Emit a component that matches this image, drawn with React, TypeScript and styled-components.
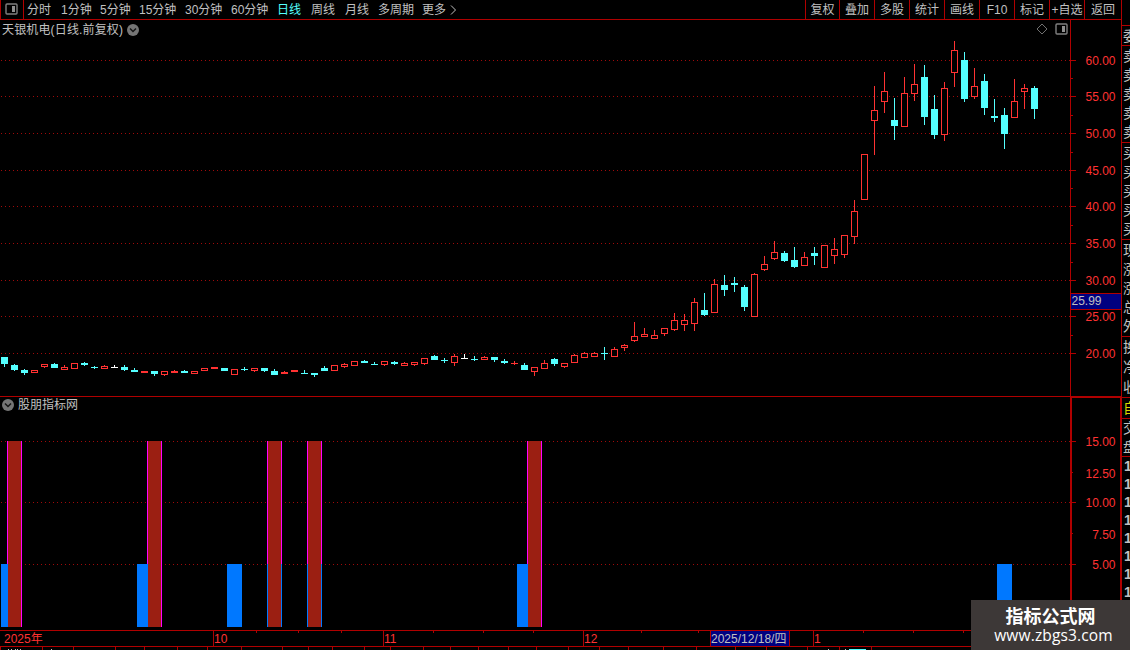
import styled, { createGlobalStyle } from 'styled-components'

const RED = '#b00000'
const UP = '#ff3232'
const DOWN = '#54ffff'
const TEXT = '#c0c0c0'

// [color, high, bodyTop, bodyBottom, low] - r: up, c: down, w: flat
type Candle = [string, number, number, number, number]

const candles: Candle[] = [
    ['c', 357, 357, 364, 367], ['c', 364, 365, 370, 371], ['c', 369, 370, 373, 375], ['r', 370, 370, 373, 373],
    ['r', 364, 364, 367, 368], ['c', 363, 364, 368, 368], ['r', 365, 367, 370, 370], ['r', 363, 363, 369, 369],
    ['c', 362, 363, 365, 366], ['c', 366, 367, 368, 369], ['r', 365, 366, 369, 369], ['w', 365, 367, 368, 368],
    ['c', 365, 367, 370, 371], ['c', 368, 370, 372, 372], ['r', 371, 371, 373, 373], ['c', 371, 371, 374, 376],
    ['r', 371, 371, 375, 376], ['r', 370, 371, 373, 373], ['c', 370, 371, 373, 373], ['r', 371, 371, 374, 374],
    ['r', 368, 368, 371, 371], ['r', 367, 367, 369, 369], ['c', 368, 368, 371, 371], ['r', 369, 369, 375, 375],
    ['c', 367, 369, 370, 371], ['r', 368, 368, 371, 372], ['c', 368, 368, 371, 372], ['c', 369, 371, 375, 375],
    ['r', 371, 372, 374, 374], ['r', 370, 370, 372, 372], ['c', 370, 373, 374, 374], ['c', 373, 373, 375, 377],
    ['c', 366, 368, 371, 371], ['r', 365, 365, 371, 371], ['r', 363, 364, 367, 368], ['r', 361, 361, 366, 366],
    ['c', 360, 361, 363, 363], ['c', 362, 364, 365, 365], ['r', 361, 361, 365, 366], ['c', 361, 362, 364, 365],
    ['r', 362, 363, 366, 366], ['r', 362, 362, 365, 366], ['r', 358, 358, 364, 365], ['c', 355, 356, 360, 360],
    ['c', 358, 360, 361, 363], ['r', 354, 356, 363, 366], ['w', 354, 358, 359, 359], ['c', 356, 359, 360, 361],
    ['r', 356, 357, 360, 360], ['c', 357, 357, 360, 362], ['c', 359, 361, 363, 364], ['r', 361, 363, 364, 365],
    ['c', 363, 365, 370, 370], ['r', 367, 367, 372, 376], ['r', 360, 363, 369, 369], ['c', 358, 359, 364, 366],
    ['r', 363, 363, 367, 368], ['r', 354, 355, 363, 363], ['r', 352, 353, 358, 358], ['r', 352, 353, 357, 357],
    ['c', 347, 353, 354, 360], ['r', 347, 349, 357, 357], ['r', 344, 345, 348, 351], ['r', 322, 336, 341, 342],
    ['r', 328, 334, 337, 337], ['r', 330, 335, 339, 339], ['r', 328, 328, 334, 336], ['r', 313, 320, 330, 331],
    ['r', 314, 320, 325, 331], ['r', 298, 302, 324, 331], ['c', 293, 310, 315, 316], ['r', 279, 284, 313, 313],
    ['c', 275, 285, 290, 296], ['c', 277, 283, 285, 292], ['c', 285, 287, 307, 311], ['r', 273, 274, 317, 317],
    ['r', 256, 264, 270, 271], ['r', 241, 252, 259, 260], ['c', 251, 253, 261, 262], ['c', 247, 260, 267, 268],
    ['r', 252, 257, 266, 266], ['c', 247, 253, 256, 265], ['r', 245, 245, 268, 268], ['r', 238, 249, 256, 264],
    ['r', 235, 235, 255, 258], ['r', 200, 211, 237, 244], ['r', 154, 154, 200, 200], ['r', 86, 110, 121, 155],
    ['r', 72, 91, 102, 113], ['c', 98, 120, 126, 140], ['r', 77, 93, 127, 127], ['r', 64, 84, 94, 101],
    ['c', 65, 77, 117, 125], ['c', 95, 109, 135, 139], ['r', 82, 88, 135, 141], ['r', 41, 50, 73, 87],
    ['c', 52, 60, 99, 102], ['r', 68, 86, 97, 99], ['c', 74, 81, 108, 115], ['c', 99, 116, 118, 122],
    ['c', 108, 115, 134, 149], ['r', 79, 101, 118, 118], ['r', 84, 88, 92, 109], ['c', 86, 88, 109, 119],
]

const priceTicks = [60, 96, 133, 170, 206, 243, 280, 316, 353]
const priceMinor = [78, 115, 152, 188, 225, 262, 335]
const signalGrid = [441, 502, 564]
const signalLabels: [string, number][] = [
    ['15.00', 442], ['12.50', 474], ['10.00', 503], ['7.50', 535], ['5.00', 565],
]

const periods = [
    { text: '分时', width: 34 },
    { text: '1分钟', width: 39 },
    { text: '5分钟', width: 39 },
    { text: '15分钟', width: 46 },
    { text: '30分钟', width: 46 },
    { text: '60分钟', width: 46 },
    { text: '日线', width: 34, active: true },
    { text: '周线', width: 34 },
    { text: '月线', width: 33 },
    { text: '多周期', width: 44 },
    { text: '更多', width: 27 },
]

const tools = [
    { text: '复权', width: 34 },
    { text: '叠加', width: 35 },
    { text: '多股', width: 35 },
    { text: '统计', width: 35 },
    { text: '画线', width: 35 },
    { text: 'F10', width: 35 },
    { text: '标记', width: 35 },
    { text: '+自选', width: 35 },
    { text: '返回', width: 36 },
]

const quoteGroups = [
    { height: 20, rows: ['委'] },
    { height: 97, rows: ['卖', '卖', '卖', '卖', '卖'] },
    { height: 97, rows: ['买', '买', '买', '买', '买'] },
    { height: 97, rows: ['现', '涨', '涨', '总', '外'] },
    { height: 61, rows: ['换', '净', '收'] },
    { height: 21, rows: ['自'], color: '#d8d800' },
    { height: 38, rows: ['交', '盘'] },
]

const months = [
    { text: '2025年', width: 213, pad: 4 },
    { text: '10', width: 170, pad: 0 },
    { text: '11', width: 200, pad: 0 },
    { text: '12', width: 127, pad: 0 },
    { text: '2025/12/18/四', width: 79, pad: 0, current: true },
    { text: '', width: 24, pad: 0 },
    { text: '1', width: 308, pad: 0 },
]

const dayTicks = [256, 298, 341, 433, 483, 533, 641, 698, 863, 913, 963]
const tabTicks = [
    0, 42, 73, 115, 144, 177, 207, 241, 282, 308, 332, 364, 390, 423, 450, 478,
    508, 536, 568, 599, 628, 663, 696, 735, 766, 807, 839, 871,
]

const PanelIcon = () => (
    <svg width="13" height="12" viewBox="0 0 13 12">
        <rect x="1" y="1" width="11" height="10" rx="1" fill="none" stroke="#808080" strokeWidth="1.4" />
        <rect x="7" y="3" width="3" height="6" fill="#909090" />
    </svg>
)

const CollapseIcon = () => (
    <svg width="12" height="12" viewBox="0 0 12 12">
        <circle cx="6" cy="6" r="6" fill="#757575" />
        <path d="M3 4.5 L6 7.5 L9 4.5" fill="none" stroke="#151515" strokeWidth="1.5" />
    </svg>
)

const Dots = ({ y }: { y: number }) => (
    <path d={`M1 ${y + 0.5}H1070`} stroke="#a00a0a" strokeDasharray="1 3" />
)

const PriceChart = () => (
    <Chart width="1121" height="377" viewBox="0 20 1121 377" shapeRendering="crispEdges">
        {priceTicks.map((y) => <Dots key={y} y={y} />)}
        {candles.map(([kind, high, top, bottom, low], i) => {
            const x = i * 10
            const color = kind === 'r' ? UP : kind === 'c' ? DOWN : '#fff'
            return (
                <g key={i} fill={color}>
                    <rect x={x + 4} y={high} width="1" height={low - high} />
                    <rect x={x + 1} y={top} width="7" height={bottom - top} />
                    {kind === 'r' && bottom - top > 2 && (
                        <rect x={x + 2} y={top + 1} width="5" height={bottom - top - 2} fill="#000" />
                    )}
                </g>
            )
        })}
        <rect x="1070" y="20" width="1" height="377" fill={RED} />
        {priceTicks.map((y, i) => (
            <g key={y}>
                <rect x="1071" y={y} width="5" height="1" fill={RED} />
                <AxisText x="1085.5" y={y + 5} textLength="30">{(60 - i * 5).toFixed(2)}</AxisText>
            </g>
        ))}
        {priceMinor.map((y) => <rect key={y} x="1071" y={y} width="2" height="1" fill={RED} />)}
        <rect x="1071" y="293" width="50" height="17" fill={RED} />
        <rect x="1071" y="294" width="50" height="15" fill="#000080" />
        <AxisText x="1071.5" y="305" textLength="30" $color={TEXT}>25.99</AxisText>
        <rect x="0" y="396" width="1121" height="1" fill={RED} />
    </Chart>
)

const tallBars = [7, 147, 267, 307, 527]
const shortBars: [number, number][] = [
    [1, 7], [137, 11], [227, 15], [267, 1], [281, 1], [307, 1], [321, 1], [517, 11], [997, 15],
]

const SignalChart = () => (
    <Chart width="1122" height="233" viewBox="0 397 1122 233" shapeRendering="crispEdges">
        {signalGrid.map((y) => <Dots key={y} y={y} />)}
        {tallBars.map((x) => (
            <g key={x}>
                <rect x={x} y="441" width="15" height="186" fill="#f0f" />
                <rect x={x + 1} y="441" width="13" height="186" fill="#9b1f12" />
            </g>
        ))}
        {shortBars.map(([x, width]) => <rect key={x} x={x} y="564" width={width} height="63" fill="#0078ff" />)}
        <rect x="1070" y="397" width="2" height="233" fill={RED} />
        <rect x="1070" y="397" width="52" height="1" fill={RED} />
        <rect x="1120" y="397" width="2" height="233" fill={RED} />
        {signalGrid.map((y) => <rect key={y} x="1072" y={y} width="4" height="1" fill={RED} />)}
        {[472, 533].map((y) => <rect key={y} x="1072" y={y} width="1" height="1" fill={RED} />)}
        {signalLabels.map(([label, y]) => {
            const length = label.length * 6.67 - 3.35
            return <AxisText key={label} x={1115.5 - length} y={y + 4} textLength={length}>{label}</AxisText>
        })}
    </Chart>
)

const App = () => {
    return (
        <Page>
            <GlobalStyle />
            <Main>
                <Toolbar>
                    <PanelButton><PanelIcon /></PanelButton>
                    <Periods>
                        {periods.map((item) => (
                            <Period key={item.text} $width={item.width} $active={item.active}>{item.text}</Period>
                        ))}
                        <svg width="8" height="10" viewBox="0 0 8 10">
                            <path d="M2 0.5 L6.5 5 L2 9.5" fill="none" stroke={TEXT} />
                        </svg>
                    </Periods>
                    <Tools>
                        {tools.map((item) => (
                            <Tool key={item.text} $width={item.width}>{item.text}</Tool>
                        ))}
                    </Tools>
                </Toolbar>
                <Pane $height={377}>
                    <PriceChart />
                    <PaneTitle $top={1} $spacing={0.15}>天银机电(日线.前复权)<CollapseIcon /></PaneTitle>
                    <PaneActions>
                        <svg width="12" height="12" viewBox="0 0 12 12">
                            <path d="M6 1 L11 6 L6 11 L1 6Z" fill="none" stroke="#707070" />
                        </svg>
                        <PanelIcon />
                    </PaneActions>
                </Pane>
                <Pane $height={233}>
                    <SignalChart />
                    <PaneTitle $top={-1} $spacing={0}><CollapseIcon />股朋指标网</PaneTitle>
                </Pane>
                <TimeAxis>
                    {months.map((month, i) => (
                        <Month key={i} $width={month.width} $pad={month.pad} $current={month.current}>{month.text}</Month>
                    ))}
                    <DayTicks width="1121" height="3" shapeRendering="crispEdges">
                        {dayTicks.map((x) => <rect key={x} x={x} y="0" width="1" height="2" fill={RED} />)}
                    </DayTicks>
                </TimeAxis>
                <svg width="1121" height="3" shapeRendering="crispEdges">
                    {tabTicks.map((x) => <rect key={x} x={x} y="0" width="1" height="3" fill={RED} />)}
                    {[8, 11, 15, 17, 20, 51, 828, 845].map((x) => (
                        <rect key={x} x={x} y="2" width="1" height="1" fill={TEXT} />
                    ))}
                    <rect x="849" y="2" width="17" height="1" fill={DOWN} />
                </svg>
            </Main>
            <Quotes>
                {quoteGroups.map((group, i) => (
                    <QuoteGroup key={i} $height={group.height} $color={group.color}>
                        {group.rows.map((row, j) => <span key={j}>{row}</span>)}
                    </QuoteGroup>
                ))}
                <Trades>
                    {Array.from({ length: 8 }, (_, i) => <span key={i}>1</span>)}
                </Trades>
            </Quotes>
            <Watermark>
                <strong>指标公式网</strong>
                <span>www.zbgs3.com</span>
            </Watermark>
        </Page>
    )
}

const GlobalStyle = createGlobalStyle`
    * {
        box-sizing: border-box;
    }

    body {
        margin: 0;
        background: #000;
        overflow: hidden;
    }

    svg {
        display: block;
        flex-shrink: 0;
    }
`

const Page = styled.div`
    position: relative;
    display: flex;
    width: 1130px;
    height: 650px;
    overflow: hidden;
    background: #000;
    color: ${TEXT};
    font-family: 'Liberation Sans', 'Noto Sans CJK SC', sans-serif;
    font-size: 12px;
    line-height: 16px;
    white-space: nowrap;
`

const Main = styled.main`
    width: 1121px;
    flex-shrink: 0;
`

const Toolbar = styled.header`
    display: flex;
    height: 20px;
    border-bottom: 1px solid ${RED};
`

const PanelButton = styled.div`
    width: 24px;
    padding: 3px 0 0 4px;
    border: solid ${RED};
    border-width: 0 1px;
`

const Periods = styled.nav`
    display: flex;
    align-items: center;
    padding-left: 3px;
`

const Period = styled.span<{ $width: number; $active?: boolean }>`
    width: ${({ $width }) => $width}px;
    flex-shrink: 0;
    color: ${({ $active }) => ($active ? DOWN : TEXT)};
`

const Tools = styled.div`
    display: flex;
    margin-left: auto;
    border-left: 1px solid ${RED};
`

const Tool = styled.div<{ $width: number }>`
    display: flex;
    align-items: center;
    justify-content: center;
    width: ${({ $width }) => $width}px;
    border-right: 1px solid ${RED};

    &:last-child {
        border-right: none;
    }
`

const Pane = styled.section<{ $height: number }>`
    position: relative;
    height: ${({ $height }) => $height}px;
`

const Chart = styled.svg`
    overflow: visible;
`

const AxisText = styled.text<{ $color?: string }>`
    fill: ${({ $color }) => $color || UP};
    font-size: 12px;
`

const PaneTitle = styled.div<{ $top: number; $spacing: number }>`
    position: absolute;
    top: ${({ $top }) => $top}px;
    left: 2px;
    display: flex;
    align-items: center;
    gap: 4px;
    height: 18px;
    letter-spacing: ${({ $spacing }) => $spacing}px;
`

const PaneActions = styled.div`
    position: absolute;
    top: 3px;
    left: 1036px;
    display: flex;
    gap: 7px;
`

const TimeAxis = styled.div`
    position: relative;
    display: flex;
    height: 17px;
    border: solid ${RED};
    border-width: 1px 0;
`

const DayTicks = styled.svg`
    position: absolute;
    top: 0;
    left: 0;
`

const Month = styled.div<{ $width: number; $pad: number; $current?: boolean }>`
    width: ${({ $width }) => $width}px;
    flex-shrink: 0;
    padding-left: ${({ $pad }) => $pad}px;
    border-left: ${({ $pad }) => ($pad ? 'none' : `1px solid ${RED}`)};
    background: ${({ $current }) => ($current ? '#000080' : 'transparent')};
    color: ${({ $current }) => ($current ? TEXT : UP)};
    line-height: 16px;
`

const Quotes = styled.aside`
    width: 9px;
    padding-top: 25px;
    border-left: 1px solid ${RED};
    overflow: hidden;
`

const QuoteGroup = styled.div<{ $height: number; $color?: string }>`
    display: flex;
    flex-direction: column;
    justify-content: space-around;
    height: ${({ $height }) => $height}px;
    padding-left: 1px;
    border-top: 1px solid ${RED};
    color: ${({ $color }) => $color || TEXT};
    font-size: 14px;
`

const Trades = styled.div`
    display: flex;
    flex-direction: column;
    padding-left: 2px;
    border-top: 1px solid ${RED};
    font-size: 14px;
    font-weight: bold;
    line-height: 18px;
`

const Watermark = styled.div`
    position: absolute;
    right: 0;
    bottom: 0;
    display: flex;
    flex-direction: column;
    align-items: center;
    width: 159px;
    height: 50px;
    padding-top: 5px;
    background: #3d3837;
    color: #fff;

    strong {
        font: bold 18px/20px 'Noto Sans CJK SC', sans-serif;
    }

    span {
        padding-left: 6px;
        font: 15.5px/20px 'Open Sans', sans-serif;
        letter-spacing: 0.15px;
    }
`

export default App
